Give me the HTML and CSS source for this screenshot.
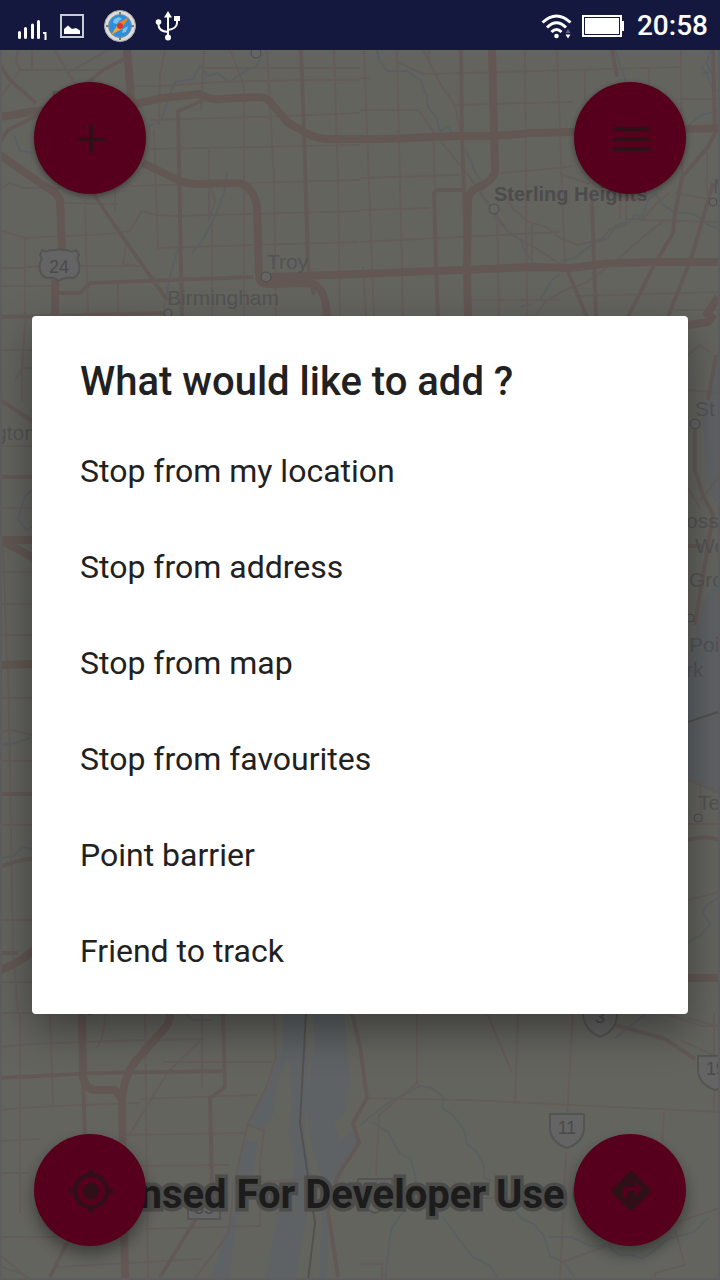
FILE: index.html
```
<!DOCTYPE html>
<html lang="en">
<head>
  <meta charset="utf-8">
  <meta name="viewport" content="width=device-width, initial-scale=1">
  <title>Route Map</title>
  <link rel="stylesheet" href="styles.css">
</head>
<body>
  <header class="status-bar">
    <div class="status-left">
      <svg width="32" height="32" viewBox="0 0 32 32" fill="none" stroke="#fff" stroke-width="3" stroke-linecap="round">
        <path d="M3.500 25.500v5M9.500 21.500v9M16.500 18v12.500M22.500 14.500v16" transform="translate(0 -3)"/>
        <path d="M27 23h2.500v7" stroke-width="2" stroke-linecap="butt"/>
      </svg>
      <svg class="picture-icon" width="24" height="24" viewBox="0 0 24 24">
        <rect x="1" y="1" width="22" height="22" fill="none" stroke="#c5cdd2" stroke-width="2"/>
        <path d="M4 20v-5l4-3.500 4 3.500 4-1 4 2.500v3.500z" fill="#fff"/>
      </svg>
      <svg class="compass-icon" width="32" height="32" viewBox="0 0 32 32">
        <circle cx="16" cy="16" r="15.500" fill="#dcdcdc" stroke="#a9a9a9"/>
        <circle cx="16" cy="16" r="11.500" fill="#2b8fdc" stroke="#8a8f96"/>
        <path d="M10 9l5-2 3 2-3 2-2 3-4-1zM19 19l5-3-2 6-4 1z" fill="#79c2ef"/>
        <path d="M16 2v2.500M16 27.500v2.500M2 16h2.500M27.500 16h2.500" stroke="#777" stroke-width="2"/>
        <path d="M25 7l-7 11-4.500-4.500z" fill="#f5821e"/>
        <path d="M7 25l7-11 4.500 4.500z" fill="#f9a037"/>
        <circle cx="16" cy="16" r="3" fill="#d8322c"/>
      </svg>
      <svg class="usb-icon" width="26" height="30" viewBox="0 0 26 30" fill="none" stroke="#fff" stroke-width="2">
        <path d="M13 4v22M3.500 12v2c0 4 4 6.500 9.500 7M22 8v4c0 4-4 6.500-9 7"/>
        <g fill="#fff" stroke="none">
          <path d="M13 0l4 6.500H9z"/>
          <circle cx="3.500" cy="11" r="2.800"/>
          <rect x="19" y="5" width="6" height="5"/>
          <circle cx="13" cy="26.500" r="3"/>
        </g>
      </svg>
    </div>
    <div class="status-right">
      <svg width="32" height="26" viewBox="0 0 32 26" fill="none" stroke="#fff" stroke-width="3">
        <path d="M1.500 9.500Q15.500-3.500 29.500 9.500M6 14.500Q15.500 5 25 14.500M10.500 19Q15.500 14 20.500 19"/>
        <circle cx="15.500" cy="23" r="2.300" fill="#fff" stroke="none"/>
        <path d="M24.500 20l2.500-4 2.500 4z" fill="#60637a" stroke="none"/>
        <path d="M24.500 21.500h5l-2.500 4z" fill="#fff" stroke="none"/>
      </svg>
      <svg width="42" height="24" viewBox="0 0 42 24">
        <rect x="1" y="2" width="38" height="20" fill="none" stroke="#fff" stroke-width="2"/>
        <rect x="3" y="4" width="34" height="16" fill="#fff"/>
        <rect x="40" y="7" width="2" height="10" fill="#fff"/>
      </svg>
      <span class="clock">20:58</span>
    </div>
  </header>

  <main class="screen">
    <svg class="map" viewBox="0 50 720 1230" preserveAspectRatio="xMidYMid slice" aria-hidden="true">
      <path class="park" d="M0 155l45 32 15 120H0zM60 200h100v80l-70 5zM520 1030h200v250H400l-35-120zM500 50h220v80H500z"/>

      <!-- water -->
      <path class="lake" d="M284 1013l-2 35-14 40-20 38 16 2 10-15 6-38 8-18 4 46-4 30 8 30-18 50-14 67h32l10-60 6-40-8-50 4-60-4-57z"/>
      <path class="lake" d="M312 1013l3 30-10 60 8 50 10 30-4 97h8l2-70 10-30 19-38-4-12-14 10-6-14 12-16 4-30-6-67z"/>
      <path class="lake" d="M246 1140l12 2-6 40-12 22-8 50-2 26h-20l10-30 12-40 4-40z"/>
      <path class="lake" d="M718 350l-8 40-8 24 4 60 8 28h6zM718 575l-16 30-14 60v115l30 10z"/>
      <g class="river">
        <path d="M263 55l-8 12-8 3-12 8-5 5-12-10-10 3-8-10-7 13-18 3-5 12-8 25-14 8M227 173l-3 20-10 25-10 20-12 15M178 248l-8 28-6 32M14 135l6 16 12 2"/>
        <path d="M377 50l2 10 8 11h20l14 10 6 16 1 10 8 10 4 14 8-4 8 12M466 150l10 24 8 10-3 12 12 12 4 12 12 12 12 8 4 12 8 10 14 7 10-2M712 50l-6 12 5 10-10 2M701 66l6 8 4 12 8 6M615 50l5 15 6 17M689 125l12-10 18-4M560 274l-8 6-12 20M520 307l12-3"/>
        <path d="M562 261l14-4 18-14 14-5 8-13 14-3 4-7 8 2 6-17 8-6 6 10 12 8 20 2 16 12 20 5"/>
        <path d="M360 1125l28-22 32-17 12 2 12 10-2 10 10 6 12 16 3 14 10 8 7 14v12l12 4M372 1122l16 10 12 22 10 4 6 20-3 20 6 6-18 10-10 16-6 50M443 1217l14 20 16 20 16 8 10 15M514 1210l8 9 12 5 10 12 6 20 14 6 10 15M549 1237h22l20 9 16-1 12 10h12l12 4 25-20 26-7 14-14"/>
        <path d="M32 490l-8 8-6 20 8 12 6-3M0 745l16-2 14-5M2 858l12-2 8-9 10 2M718 898l-10 6-6 8 8 12-10 12-16 8M2 1267l20 7M615 1038l32-25"/>
      </g>

      <!-- streets -->
      <g class="street">
        <path d="M18 50l-2 12 4 8h88M20 70L0 98M32 50v20M108 50l-40 23M55 50l12 22 15 20M165 50l-5 25-1 50M204 50l-3 60M230 50l14 36v230M267 50l7 130 2 137M334 50l4 130 2 137M130 86h30M203 68h157M160 86l60-4 80-2h60M150 120l110-3 100-4M150 149l210-4M130 186l230-6M0 189l9-6 15 5h36M60 203l58 1M154 130l4 118 200-6M209 150v70l6-18-6-24M212 220v96M0 230l25 8 83-4 22-3 12-20 14 4 20 1 184-5M85 200l3 117M115 190v20M127 240l-4 24 14 2M25 238v79M0 268l50-2M50 266h90M0 286h60M118 280v37"/>
        <path d="M364 50l10 267M397 50l6 267M423 50l18 35 14 20 5 25M397 62l26 12 257-7M429 50v14M525 50l2 267M557 50l8 217M585 71v30M681 50l1 130M649 67v30M360 78h10M360 110h58l20 28 30 37 10 14 32 45 24 13 31 20M452 105l121-3M680 99h38M433 130l2 60M360 178l100-3M500 173l60-5 12-2M560 174l30 10M505 195l8 14 16 13 17 5 8 6 8 6 16 6 24-6 8-10 16-4v-32M625 219h18l14-16 12-10M617 260l32-28 16-12h12M360 210l70-2M360 242l200-10M497 211l2 106M363 267l3 50M535 317l10-15 20-12 20-7 26-18M470 300h90M575 296l145-4M640 220l80 2M675 193l43 8M620 185v34M707 145v50M674 310h45M532 224v40"/>
        <path d="M0 1047l32-3 110-4 62-1M20 1013v200M50 1013l3 93M106 1013l-4 25-5 10M145 1013l3 265M184 1013l10 7h18M202 1013v75M274 1013l2 45-10 30-18 35-14 60-5 50-34 45M0 1110l20-2 60-3 60-2M140 1099l117-4M128 1137l40-65 34-33M0 1141l40-2M120 1135l125-2M0 1173h30M130 1166l100-1M246 1124l18 7-4 30v65l-40 1-75 2M0 1237h60M0 1255l30 25M56 1267l145-8M163 1062h110M232 1184l80-5"/>
        <path d="M417 1013v70l-38 32-3 60M365 1098l100 2 255 12M487 1013l25 60M518 1013l-3 92M573 1013l-6 105M714 1013v100M566 1152l-6 128M562 1262l60-22 98-32M675 1230l10 35-30 8v7M664 1112l-2 35M480 1198h70M360 1264h22v16M662 1013l40 13h18M680 1040l38 17"/>
        <path d="M26 316l-4 50v36M0 350h34M15 380l8-12h10M0 446h34M0 508h34M3 540l4 130M0 572h34M0 604h34M0 635h34M8 660l5 290 5 64M0 698h34M0 732l12-2 20 5M0 761h34M0 825h34M0 920h34M0 982h34M0 1013h34M688 390l30 3M688 355l12-10 10 7M688 488l12 20M700 500l18-22M688 780l30 12M700 782l2 40M688 824h32M688 900l32-8M688 1018l30 8"/>
      </g>

      <g class="road">
        <path d="M203 100l-13 6-12 5 4 206M301 50l3 80 4 135 6 30M93 193l20 30 54 77M58 293h22l10-10 163-6M0 142l8-12 32-16M36 103L10 80 0 65M85 85l18-15 25-13M0 317l165-4M461 50l1 83 6 184M463 190h-26l-3 3 2 74 2 50M612 50l5 27M592 200l2 63 2 54M713 50l2 83-7 14-26 30-7 36-2 20-20 34-25 50M713 183l-20 70-25 64M568 272l19 45"/>
        <path d="M0 1078l97-5 126-2M223 1013l2 74-15 11 2 89M83 1085l2 50M197 1217l-37 60M67 1243l-17 34M352 1013l8 34 7 51-14 25 6 20-22 34-9 33 10 67M616 1025l49 14 30 20M0 400l34 22M0 477h34M0 794h34M0 867q18-8 34-8M0 953h18M716 355l-8 45M695 430v40l8 25 10 20-18 110M688 546h14M688 840q15-5 32 0"/>
      </g>

      <g class="highway">
        <path d="M0 117l35-6 105-8 23-5 37-4q10 6 18 5l39-2q10 0 15 7l15 18q8 5 18 10 9 6 20 7h58l77-3h35l38-3 40-1 120-3 25-1"/>
        <path d="M127 50l5 60M0 155l43 30q15 8 17 15l2 50M55 280v37M143 163l37 18q8 3 17 3l41-1q15 2 19 24l2 70q1 7 8 7l43-1q16 3 17 34"/>
        <path d="M270 277l90-3 100-4 73-3 37 1 40-5 50-1h60M492 50l3 120q0 8-12 15-14 5-15 15l-1 70 1 47M718 297l-13 20"/>
        <path d="M82 1013l1 64q3 13 12 13h20l7 10M170 1013q0 10-6 16l-30 34q-12 18-12 40l3 175"/>
        <path d="M0 540l34 18M0 540h34M0 665l34-1M0 970q18-6 34-20M688 978h32M688 325l20-3 6-8"/>
      </g>
      <path class="rail" d="M306 1013l-6 110 15 100-7 57M688 722l30-10"/>

      <!-- places -->
      <g class="towns">
        <circle cx="256" cy="53" r="5"/>
        <circle cx="266" cy="277" r="5"/>
        <circle cx="168" cy="313" r="4"/>
        <circle cx="494" cy="209" r="5"/>
        <circle cx="713" cy="202" r="4"/>
        <circle cx="695" cy="424" r="5"/>
        <circle cx="690" cy="618" r="4"/>
        <circle cx="698" cy="818" r="4"/>
        <circle cx="90" cy="1011" r="4"/>
      </g>
      <g class="labels">
        <text x="51" y="105">F</text>
        <text x="267" y="269">Troy</text>
        <text x="167" y="305">Birmingham</text>
        <text class="city" x="494" y="201">Sterling Heights</text>
        <text x="713" y="193">M</text>
        <text x="-5" y="440">gton</text>
        <text x="695" y="416">St</text>
        <text x="686" y="528">oss</text>
        <text x="695" y="553">Wo</text>
        <text x="689" y="587">Gro</text>
        <text x="689" y="652">Poi</text>
        <text x="686" y="677">rk</text>
        <text x="698" y="810">Te</text>
      </g>

      <!-- route shields -->
      <g class="shields">
        <path d="M42 250q4 3 8 0 5 1 9-1 5 2 9 1 4 3 8 0l3 5q-3 4 0 8 2 12-6 15-9-1-14 3-5-4-13-3-8-4-6-15 3-4 0-8z"/>
        <path d="M583 1000h34v17q-2 14-17 20-14-6-17-20z"/>
        <path d="M550 1114h34v16q-2 13-17 18-15-5-17-18z"/>
        <path d="M698 1056h34v16q-2 14-17 18-15-5-17-18z"/>
        <path d="M358 1179h34v16q-2 13-17 18-15-5-17-18z"/>
        <path d="M188 1199h32v20h-32z"/>
        <text x="59" y="273">24</text>
        <text x="600" y="1023">3</text>
        <text x="567" y="1134">11</text>
        <text x="716" y="1075">19</text>
        <text x="204" y="1214">85</text>
      </g>
      <path class="map-edge" d="M1 50v1229h718V50"/>
    </svg>

    <p class="watermark">Licensed For Developer Use Only</p>

    <div class="controls">
      <div class="controls-row">
        <button class="fab" type="button" aria-label="Add">
          <svg viewBox="0 0 24 24"><path d="M19 13h-6v6h-2v-6H5v-2h6V5h2v6h6v2z"/></svg>
        </button>
        <button class="fab" type="button" aria-label="Menu">
          <svg viewBox="0 0 24 24"><path d="M3 18h18v-2H3v2zm0-5h18v-2H3v2zm0-7v2h18V6H3z"/></svg>
        </button>
      </div>
      <div class="controls-row">
        <button class="fab fab-low" type="button" aria-label="My location">
          <svg viewBox="0 0 24 24"><path d="M12 8c-2.210 0-4 1.790-4 4s1.790 4 4 4 4-1.790 4-4-1.790-4-4-4zm8.940 3c-.460-4.170-3.770-7.480-7.940-7.940V1h-2v2.060C6.830 3.520 3.520 6.830 3.060 11H1v2h2.060c.460 4.170 3.770 7.480 7.940 7.940V23h2v-2.060c4.170-.460 7.480-3.770 7.940-7.940H23v-2h-2.060zM12 19c-3.870 0-7-3.130-7-7s3.130-7 7-7 7 3.130 7 7-3.130 7-7 7z"/></svg>
        </button>
        <button class="fab fab-low" type="button" aria-label="Directions">
          <svg viewBox="0 0 24 24"><path d="M21.710 11.290l-9-9c-.390-.390-1.020-.390-1.410 0l-9 9c-.390.390-.390 1.020 0 1.410l9 9c.390.390 1.020.390 1.410 0l9-9c.390-.380.390-1.010 0-1.410zM14 14.500V12h-4v3H8v-4c0-.550.450-1 1-1h5V7.500l3.500 3.500-3.500 3.500z"/></svg>
        </button>
      </div>
    </div>

    <div class="overlay">
      <div class="dialog" role="dialog" aria-modal="true" aria-labelledby="dialog-title">
        <h1 class="dialog-title" id="dialog-title">What would like to add ?</h1>
        <ul class="dialog-list">
          <li><button type="button">Stop from my location</button></li>
          <li><button type="button">Stop from address</button></li>
          <li><button type="button">Stop from map</button></li>
          <li><button type="button">Stop from favourites</button></li>
          <li><button type="button">Point barrier</button></li>
          <li><button type="button">Friend to track</button></li>
        </ul>
      </div>
    </div>
  </main>
</body>
</html>
```
FILE: styles.css
```
* {
  box-sizing: border-box;
}

body {
  margin: 0;
  min-height: 100vh;
  display: flex;
  flex-direction: column;
  font-family: Roboto, sans-serif;
  color: #212121;
}

/* Status bar */
.status-bar {
  display: flex;
  justify-content: space-between;
  align-items: center;
  height: 50px;
  padding: 2px 12px 0 16px;
  background-color: #14183f;
  color: #fff;
}

.status-left,
.status-right {
  display: flex;
  align-items: center;
}

.status-right {
  gap: 9px;
}

.status-left svg {
  display: block;
}

.status-left .picture-icon {
  margin-left: 12px;
}

.status-left .compass-icon {
  margin-left: 20px;
}

.status-left .usb-icon {
  margin-left: 19px;
}

.clock {
  margin-left: 4px;
  font-size: 28px;
  font-weight: 500;
  line-height: 32px;
}

/* Map */
.screen {
  position: relative;
  flex: 1;
  display: flex;
  overflow: hidden;
  background-color: #faf9ed;
}

.map {
  position: absolute;
  width: 100%;
  height: 100%;
  fill: none;
}

.park {
  fill: #f9fbee;
}

.lake {
  fill: #ebf5fb;
}

.river {
  stroke: #e1eef4;
  stroke-width: 2;
}

.street {
  stroke: #f7e7e0;
  stroke-width: 2;
}

.road {
  stroke: #f6dfd6;
  stroke-width: 4;
  stroke-linejoin: round;
}

.highway {
  stroke: #f4d9cf;
  stroke-width: 8;
  stroke-linejoin: round;
}

.rail {
  stroke: #cccbc8;
  stroke-width: 2;
}

.map-edge {
  stroke: #ebebf0;
  stroke-width: 2;
}

.towns {
  fill: #faf9fa;
  stroke: #bebebe;
}

.labels {
  fill: #cfcfd4;
  font-family: "Liberation Sans", Arial, sans-serif;
  font-size: 21px;
}

.labels .city {
  fill: #bebec4;
  font-size: 20px;
  font-weight: bold;
}

.shields {
  fill: #fafafc;
  stroke: #d2d2d2;
  stroke-width: 2;
}

.shields text {
  fill: #b9b9b9;
  stroke: none;
  font-family: "Liberation Sans", Arial, sans-serif;
  font-size: 18px;
  text-anchor: middle;
}

.watermark {
  position: absolute;
  left: 0;
  right: 0;
  bottom: 61px;
  margin: 0;
  color: #464646;
  font-size: 40px;
  font-weight: 700;
  line-height: 48px;
  text-align: center;
  white-space: nowrap;
  -webkit-text-stroke: 7px #bebeb9;
  stroke-linejoin: round;
  paint-order: stroke fill;
}

/* Floating buttons */
.controls {
  position: relative;
  flex: 1;
  display: flex;
  flex-direction: column;
  justify-content: space-between;
  padding: 32px 34px 34px;
}

.controls-row {
  display: flex;
  justify-content: space-between;
}

.fab {
  display: flex;
  align-items: center;
  justify-content: center;
  width: 112px;
  height: 112px;
  padding: 2px 0 0 2px;
  border: none;
  border-radius: 50%;
  background-color: #d8004b;
  box-shadow: 0 2px 6px rgba(0, 0, 0, 0.4);
  cursor: pointer;
}

.fab-low {
  box-shadow: 0 8px 16px rgba(0, 0, 0, 0.4);
}

.fab svg {
  width: 48px;
  height: 48px;
  fill: #752840;
}

/* Dialog */
.overlay {
  position: absolute;
  inset: 0;
  display: flex;
  align-items: center;
  justify-content: center;
  padding: 32px;
  background-color: rgba(0, 0, 0, 0.6);
}

.dialog {
  width: 100%;
  padding: 42px 0 15px;
  border-radius: 4px;
  background-color: #fff;
  box-shadow: 0 16px 40px rgba(0, 0, 0, 0.4);
}

.dialog-title {
  margin: 0;
  padding: 0 48px 17px;
  font-size: 40px;
  font-weight: 500;
  line-height: 48px;
}

.dialog-list {
  margin: 0;
  padding: 0;
  list-style: none;
}

.dialog-list button {
  display: block;
  width: 100%;
  min-height: 96px;
  padding: 0 48px;
  border: none;
  background: none;
  color: inherit;
  font: 32px Roboto, sans-serif;
  text-align: left;
  cursor: pointer;
}
```
